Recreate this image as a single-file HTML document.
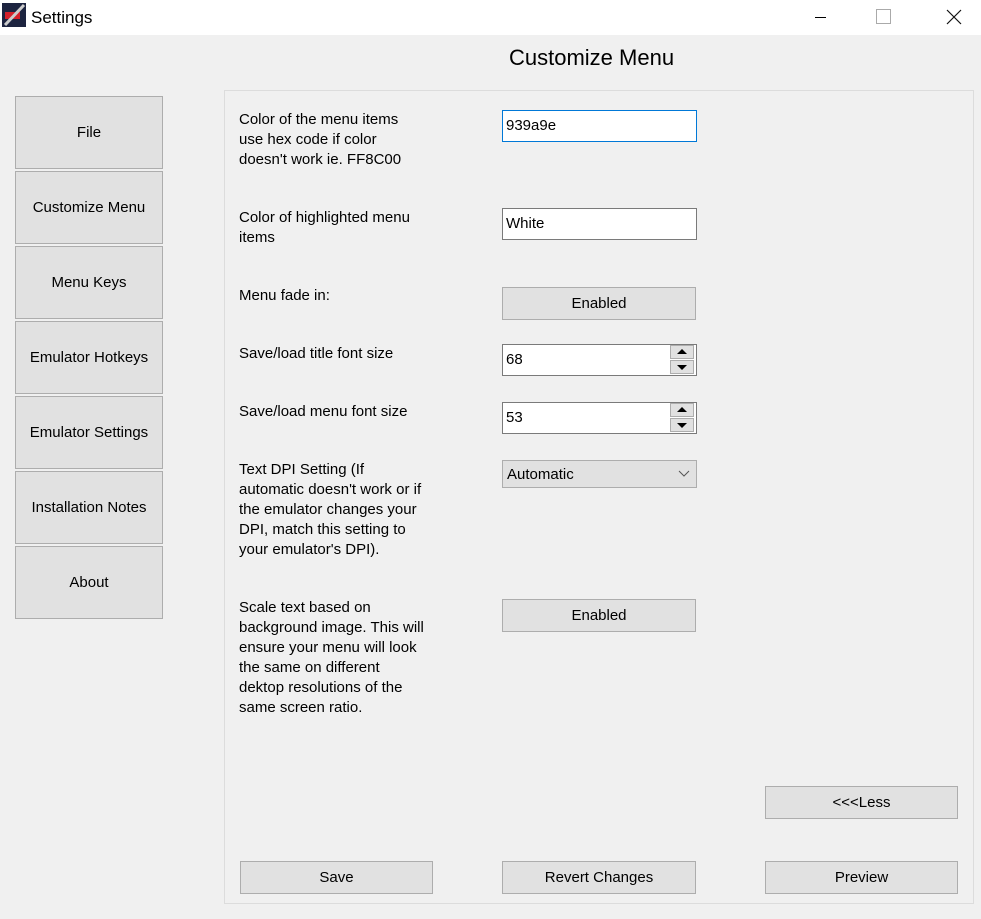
<!DOCTYPE html>
<html><head><meta charset="utf-8"><style>
*{box-sizing:border-box;margin:0;padding:0}
body{width:981px;height:919px;background:#f0f0f0;font-family:"Liberation Sans",sans-serif;font-size:15px;color:#000;position:relative;overflow:hidden}
.a{position:absolute}
.tb{left:0;top:0;width:981px;height:35px;background:#fff}
.btn{position:absolute;background:#e1e1e1;border:1px solid #adadad;display:flex;align-items:center;justify-content:center;font-size:15px}
.lbl{position:absolute;left:239px;line-height:20px;font-size:15px;white-space:nowrap}
.inp{position:absolute;background:#fff;border:1px solid #7a7a7a;padding-left:3px;line-height:30px;font-size:15px}
.spin{position:absolute;left:669px;width:27px}
.sb{position:absolute;left:1px;width:24px;height:14px;background:#e1e1e1;border:1px solid #adadad}
</style></head><body>
<div class="a tb"></div>
<svg class="a" style="left:2px;top:3px" width="24" height="24"><rect width="24" height="24" fill="#1d2440"/><rect x="3" y="9" width="15" height="7" fill="#d41f2a"/><line x1="3" y1="22" x2="22" y2="2" stroke="#ccc" stroke-width="3"/></svg>
<div class="a" style="left:31px;top:8px;font-size:17px">Settings</div>
<div class="a" style="left:815px;top:17px;width:11px;height:1px;background:#000"></div>
<div class="a" style="left:876px;top:9px;width:15px;height:15px;border:1px solid #aaa"></div>
<svg class="a" style="left:946px;top:9px" width="16" height="16"><path d="M1 1L15 15M15 1L1 15" stroke="#111" stroke-width="1.2"/></svg>
<div class="a" style="left:509px;top:45px;font-size:22px">Customize Menu</div>

<div class="btn" style="left:15px;top:96px;width:148px;height:73px">File</div>
<div class="btn" style="left:15px;top:171px;width:148px;height:73px">Customize Menu</div>
<div class="btn" style="left:15px;top:246px;width:148px;height:73px">Menu Keys</div>
<div class="btn" style="left:15px;top:321px;width:148px;height:73px">Emulator Hotkeys</div>
<div class="btn" style="left:15px;top:396px;width:148px;height:73px">Emulator Settings</div>
<div class="btn" style="left:15px;top:471px;width:148px;height:73px">Installation Notes</div>
<div class="btn" style="left:15px;top:546px;width:148px;height:73px">About</div>

<div class="a" style="left:224px;top:90px;width:750px;height:814px;border:1px solid #dcdcdc"></div>

<div class="lbl" style="top:110px">Color of the menu items<br>use hex code if color<br>doesn't work ie. FF8C00</div>
<div class="inp" style="left:502px;top:110px;width:195px;height:32px;border-color:#0078d7">939a9e</div>
<div class="lbl" style="top:208px">Color of highlighted menu<br>items</div>
<div class="inp" style="left:502px;top:208px;width:195px;height:32px">White</div>
<div class="lbl" style="top:286px">Menu fade in:</div>
<div class="btn" style="left:502px;top:287px;width:194px;height:33px">Enabled</div>
<div class="lbl" style="top:344px">Save/load title font size</div>
<div class="inp" style="left:502px;top:344px;width:195px;height:32px">68</div>
<div class="spin" style="top:345px;height:30px"><div class="sb" style="top:0px"><svg width="22" height="12" style="display:block"><path d="M6 8L11 3L16 8Z" fill="#000"/></svg></div><div class="sb" style="top:15px"><svg width="22" height="12" style="display:block"><path d="M6 4L11 9L16 4Z" fill="#000"/></svg></div></div>
<div class="lbl" style="top:402px">Save/load menu font size</div>
<div class="inp" style="left:502px;top:402px;width:195px;height:32px">53</div>
<div class="spin" style="top:403px;height:30px"><div class="sb" style="top:0px"><svg width="22" height="12" style="display:block"><path d="M6 8L11 3L16 8Z" fill="#000"/></svg></div><div class="sb" style="top:15px"><svg width="22" height="12" style="display:block"><path d="M6 4L11 9L16 4Z" fill="#000"/></svg></div></div>
<div class="lbl" style="top:460px">Text DPI Setting (If<br>automatic doesn't work or if<br>the emulator changes your<br>DPI, match this setting to<br>your emulator's DPI).</div>
<div class="a" style="left:502px;top:460px;width:195px;height:28px;background:#e1e1e1;border:1px solid #adadad;padding-left:4px;line-height:27px">Automatic<svg style="position:absolute;right:6px;top:9px" width="12" height="8"><path d="M1 1L6 6L11 1" stroke="#555" fill="none"/></svg></div>
<div class="lbl" style="top:598px">Scale text based on<br>background image. This will<br>ensure your menu will look<br>the same on different<br>dektop resolutions of the<br>same screen ratio.</div>
<div class="btn" style="left:502px;top:599px;width:194px;height:33px">Enabled</div>

<div class="btn" style="left:765px;top:786px;width:193px;height:33px">&lt;&lt;&lt;Less</div>
<div class="btn" style="left:240px;top:861px;width:193px;height:33px">Save</div>
<div class="btn" style="left:502px;top:861px;width:194px;height:33px">Revert Changes</div>
<div class="btn" style="left:765px;top:861px;width:193px;height:33px">Preview</div>
</body></html>
